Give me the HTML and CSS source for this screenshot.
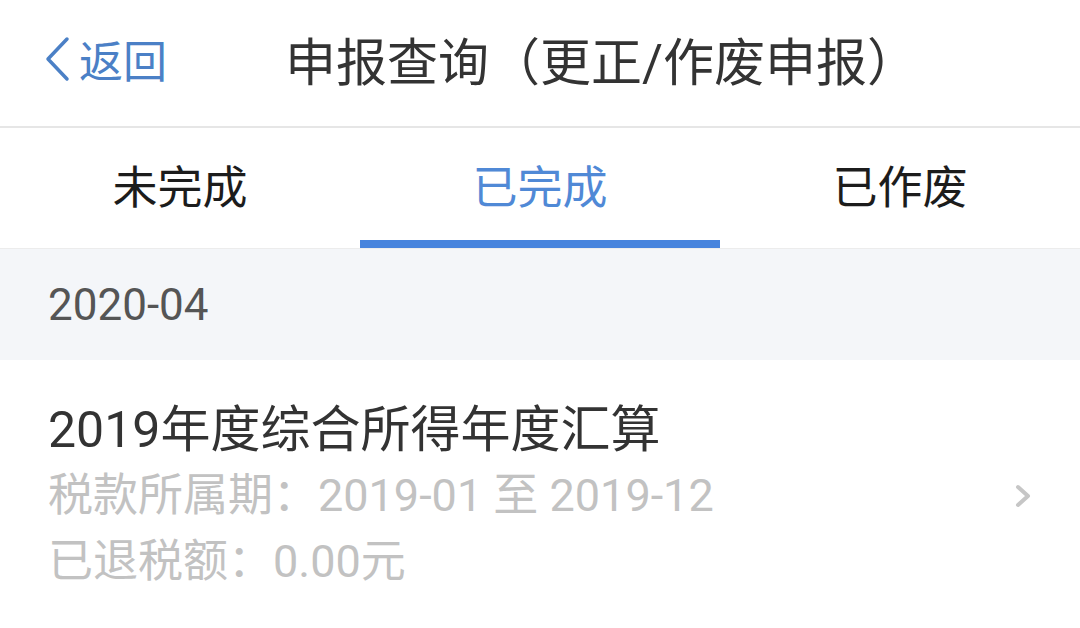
FILE: index.html
```html
<!DOCTYPE html>
<html lang="zh-CN">
<head>
    <meta charset="UTF-8">
    <meta name="viewport" content="width=device-width, initial-scale=1.0">
    <title>申报查询</title>
    <link rel="stylesheet" href="styles.css">
</head>
<body>

<header class="nav">
    <a class="back" href="#">
        <svg class="back-icon" width="28" height="48" viewBox="0 0 28 48">
            <polyline points="24,4 5,24 24,44" fill="none" stroke="currentColor" stroke-width="3.5" stroke-linecap="round" stroke-linejoin="round"/>
        </svg>
        <span>返回</span>
    </a>
    <h1 class="nav-title">申报查询（更正/作废申报）</h1>
</header>

<nav class="tabs">
    <div class="tab">未完成</div>
    <div class="tab active">已完成</div>
    <div class="tab">已作废</div>
</nav>

<div class="group-head">2020-04</div>

<div class="record">
    <div class="record-info">
        <div class="record-title">2019年度综合所得年度汇算</div>
        <div class="record-line">税款所属期：2019-01 至 2019-12</div>
        <div class="record-line">已退税额：0.00元</div>
    </div>
    <svg class="arrow" width="20" height="26" viewBox="0 0 20 26">
        <polyline points="5,4 15,13 5,22" fill="none" stroke="currentColor" stroke-width="4" stroke-linecap="round" stroke-linejoin="round"/>
    </svg>
</div>

</body>
</html>
```

FILE: styles.css
```css
body {
    margin: 0;
    font-family: Roboto, "Noto Sans CJK SC", sans-serif;
    background: #fff;
}
.nav {
    height: 118px;
    display: flex;
    align-items: center;
    padding-left: 43px;
    padding-bottom: 8px;
    border-bottom: 2px solid #e6e6e6;
}
.back {
    display: flex;
    align-items: center;
    gap: 8px;
    color: #4b80c6;
    text-decoration: none;
    font-size: 44px;
}
.nav-title {
    margin: 0 0 0 118px;
    font-size: 51px;
    font-weight: normal;
    color: #333;
}
.tabs {
    display: grid;
    grid-template-columns: repeat(3, 1fr);
    border-bottom: 1px solid #ececec;
}
.tab {
    height: 112px;
    display: flex;
    align-items: center;
    justify-content: center;
    font-size: 45px;
    color: #1c1c1c;
    border-bottom: 8px solid transparent;
}
.tab.active {
    color: #5089d6;
    border-bottom-color: #4784dd;
}
.group-head {
    height: 111px;
    display: flex;
    align-items: center;
    padding-left: 48px;
    background: #f4f6f9;
    font-size: 44px;
    color: #555;
}
.record {
    display: flex;
    align-items: center;
    justify-content: space-between;
    padding: 37px 47px 37px 48px;
}
.record-title {
    font-size: 50px;
    line-height: 66px;
    color: #333;
}
.record-line {
    font-size: 45px;
    line-height: 66px;
    color: #c2c2c2;
}
.arrow {
    color: #c6c6c6;
}
```
